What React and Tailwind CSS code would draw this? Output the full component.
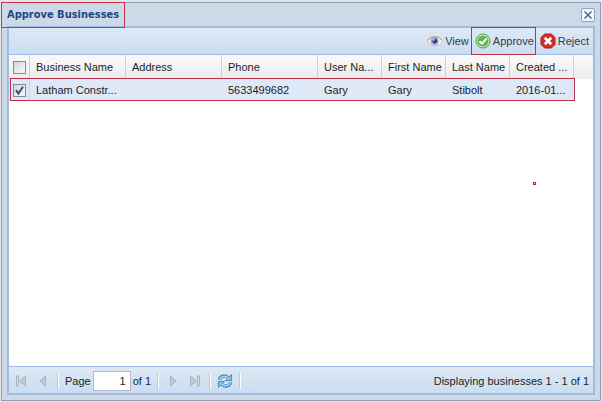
import React, { useState } from "react";

const columns = [
  { key: "name", label: "Business Name" },
  { key: "address", label: "Address" },
  { key: "phone", label: "Phone" },
  { key: "userName", label: "User Na..." },
  { key: "firstName", label: "First Name" },
  { key: "lastName", label: "Last Name" },
  { key: "created", label: "Created ..." },
];

const businesses = [
  {
    id: 1,
    name: "Latham Constr...",
    address: "",
    phone: "5633499682",
    userName: "Gary",
    firstName: "Gary",
    lastName: "Stibolt",
    created: "2016-01...",
  },
];

function EyeIcon() {
  return (
    <svg width="16" height="16" viewBox="0 0 16 16">
      <path d="M0.6 8.2C3.4 2.8 12.4 2.4 15.4 8.4C12.6 14.2 3.6 14 0.6 8.2Z" fill="#fbf7f5" stroke="#dcb296" strokeWidth="0.9" />
      <path d="M0.8 7.6C3.4 2.4 11.6 2 14.8 7" fill="none" stroke="#bda79f" strokeWidth="1.1" />
      <circle cx="7.6" cy="7.9" r="4" fill="#8aa5d2" />
      <circle cx="7.8" cy="8" r="2.3" fill="#24396f" />
      <circle cx="6.8" cy="6.8" r="0.9" fill="#fff" />
    </svg>
  );
}

function AcceptIcon() {
  return (
    <svg width="16" height="16" viewBox="0 0 16 16">
      <circle cx="8" cy="8" r="7" fill="#d3edc9" stroke="#4a9c42" strokeWidth="1" />
      <circle cx="8" cy="8" r="5.6" fill="#62b553" />
      <path d="M4.4 8.2L7 10.6L11.6 5.4" fill="none" stroke="#fff" strokeWidth="2" />
    </svg>
  );
}

function RejectIcon() {
  return (
    <svg width="16" height="16" viewBox="0 0 16 16">
      <path d="M4.6 1H11.4L15 4.6V11.4L11.4 15H4.6L1 11.4V4.6Z" fill="#d62a28" stroke="#b31c1c" strokeWidth="1" strokeLinejoin="round" />
      <path d="M4.8 4.8L11.2 11.2M11.2 4.8L4.8 11.2" stroke="#fff" strokeWidth="2.8" />
    </svg>
  );
}

function RefreshIcon() {
  return (
    <svg width="16" height="16" viewBox="0 0 16 16">
      <path d="M2.4 6.8C3 3 8.2 1.4 11.4 5" fill="none" stroke="#3a86bf" strokeWidth="3.2" />
      <path d="M14.6 1.6V7.6H8.4Z" fill="#7fbde6" stroke="#3a86bf" strokeWidth="0.9" strokeLinejoin="round" />
      <path d="M2.6 6.6C3.4 3.2 8.2 1.8 11.8 5.4" fill="none" stroke="#a9d5f0" strokeWidth="1.5" />
      <path d="M13.6 9.2C13 13 7.8 14.6 4.6 11" fill="none" stroke="#3a86bf" strokeWidth="3.2" />
      <path d="M1.4 14.4V8.4H7.6Z" fill="#7fbde6" stroke="#3a86bf" strokeWidth="0.9" strokeLinejoin="round" />
      <path d="M13.4 9.4C12.6 12.8 7.8 14.2 4.2 10.6" fill="none" stroke="#a9d5f0" strokeWidth="1.5" />
    </svg>
  );
}

function PageIcon({ bar, flip }) {
  return (
    <svg width="16" height="16" viewBox="0 0 16 16" className={flip ? "-scale-x-100" : ""}>
      {bar && <rect x="3.5" y="3" width="2" height="10" fill="#d3d8de" stroke="#a3abb5" strokeWidth="0.8" />}
      <path
        d={bar ? "M12.5 3V13L6.5 8Z" : "M10.5 3V13L5 8Z"}
        fill="#c3c9d1"
        stroke="#a3abb5"
        strokeWidth="0.8"
      />
    </svg>
  );
}

function Separator() {
  return <div className="h-4 w-0.5 border-l border-r border-l-[#b4c8e0] border-r-white" />;
}

function App() {
  const [selected, setSelected] = useState([1]);
  const [page, setPage] = useState("1");

  const toggle = (id) => {
    setSelected((prev) =>
      prev.includes(id) ? prev.filter((item) => item !== id) : [...prev, id]
    );
  };

  const checkbox =
    "block size-[13px] appearance-none border border-[#858b92] bg-linear-to-br from-[#d5d8dc] to-[#f8f8f8]";

  return (
    <div className="flex h-screen flex-col bg-[#e4e6e8] px-px pt-0.5 pb-px font-['Liberation_Sans',Arial,sans-serif] text-[11px] leading-4 text-[#1a1f26]">
      <div className="flex min-h-0 flex-1 flex-col border border-[#8c9db5] bg-[#ced9e7] px-[5px] pb-[5px]">
        <div className="flex h-[23px] shrink-0 items-center justify-between">
          <div className="relative">
            <h1 className="font-['DejaVu_Sans_Condensed','DejaVu_Sans',sans-serif] text-[11px] font-bold text-[#1c4687]">
              Approve Businesses
            </h1>
            <span className="pointer-events-none absolute -inset-x-1.5 -inset-y-[5px] z-10 border border-[#c8324a]" />
          </div>
          <button
            type="button"
            aria-label="Close"
            className="flex size-[14px] items-center justify-center rounded-xs border border-[#87a5c6] bg-[#f2f7fc]"
          >
            <svg width="8" height="8" viewBox="0 0 8 8">
              <path d="M0.5 0.5L7.5 7.5M7.5 0.5L0.5 7.5" stroke="#34628f" strokeWidth="1.4" />
            </svg>
          </button>
        </div>

        <div className="relative flex min-h-0 flex-1 flex-col border-2 border-[#a1bcde] bg-white">
          <div className="flex h-[27px] shrink-0 items-center justify-end gap-1.5 border-b border-[#99bce8] bg-linear-to-b from-[#dde8f5] to-[#cbddf1] pr-1 text-[#333b45]">
            <button type="button" className="flex items-center gap-0.5">
              <EyeIcon />
              View
            </button>
            <button type="button" className="relative flex items-center gap-0.5">
              <AcceptIcon />
              Approve
              <span className="pointer-events-none absolute -inset-y-1.5 -right-0.5 -left-1 border border-[#c0304a]" />
            </button>
            <button type="button" className="flex items-center gap-0.5">
              <RejectIcon />
              Reject
            </button>
          </div>

          <div className="min-h-0 flex-1">
            <table className="w-full table-fixed border-separate border-spacing-0 text-left">
              <colgroup>
                <col className="w-[21px]" />
                <col className="w-24" />
                <col className="w-24" />
                <col className="w-24" />
                <col className="w-16" />
                <col className="w-16" />
                <col className="w-16" />
                <col className="w-16" />
                <col />
              </colgroup>
              <thead>
                <tr className="h-6 bg-linear-to-b from-[#fafafa] to-[#ebecee]">
                  <th className="border-r border-[#d0d0d0] pl-1">
                    <input
                      type="checkbox"
                      aria-label="Select all"
                      className={checkbox}
                      checked={false}
                      onChange={() => setSelected(businesses.map((item) => item.id))}
                    />
                  </th>
                  {columns.map((col) => (
                    <th
                      key={col.key}
                      className="border-r border-[#d0d0d0] pl-1.5 font-normal whitespace-nowrap"
                    >
                      {col.label}
                    </th>
                  ))}
                  <th />
                </tr>
              </thead>
              <tbody>
                {businesses.map((item) => (
                  <tr key={item.id} className="relative h-[22px]">
                    <td className="border-r border-[#c6d6ee] bg-[#dfe8f6] pl-1">
                      <label className="relative block size-[13px]">
                        <input
                          type="checkbox"
                          aria-label={item.name}
                          className={checkbox}
                          checked={selected.includes(item.id)}
                          onChange={() => toggle(item.id)}
                        />
                        {selected.includes(item.id) && (
                          <svg
                            width="13"
                            height="13"
                            viewBox="0 0 13 13"
                            className="pointer-events-none absolute inset-0"
                          >
                            <path d="M3 6.2L5.4 9.6L10 2.8" fill="none" stroke="#3a5068" strokeWidth="2" />
                          </svg>
                        )}
                      </label>
                    </td>
                    {columns.map((col) => (
                      <td key={col.key} className="bg-[#dfe8f6] pl-1.5 whitespace-nowrap">
                        {item[col.key]}
                      </td>
                    ))}
                    <td>
                      {/* highlight around the row */}
                      <span className="pointer-events-none absolute -top-px right-[18px] bottom-0 left-px border border-[#b8304a]" />
                    </td>
                  </tr>
                ))}
              </tbody>
            </table>
          </div>

          <span className="pointer-events-none absolute top-[154px] right-[57px] size-[3px] border border-[#a8243e]" />

          <div className="flex h-[27px] shrink-0 items-center gap-1.5 border-t border-[#99bce8] bg-linear-to-b from-[#dde8f5] to-[#cbddf1] px-1 pt-0.5">
            <button type="button" aria-label="First page">
              <PageIcon bar />
            </button>
            <button type="button" aria-label="Previous page">
              <PageIcon />
            </button>
            <Separator />
            <div className="flex items-center gap-0.5">
              <label htmlFor="page">Page</label>
              <input
                id="page"
                type="text"
                value={page}
                onChange={(e) => setPage(e.target.value)}
                className="h-5 w-[38px] border border-[#b5b8c8] bg-white px-1 text-right"
              />
              <span>of 1</span>
            </div>
            <Separator />
            <button type="button" aria-label="Next page">
              <PageIcon flip />
            </button>
            <button type="button" aria-label="Last page">
              <PageIcon bar flip />
            </button>
            <Separator />
            <button type="button" aria-label="Refresh">
              <RefreshIcon />
            </button>
            <Separator />
            <span className="ml-auto">Displaying businesses 1 - 1 of 1</span>
          </div>
        </div>
      </div>
    </div>
  );
}

export default App;
